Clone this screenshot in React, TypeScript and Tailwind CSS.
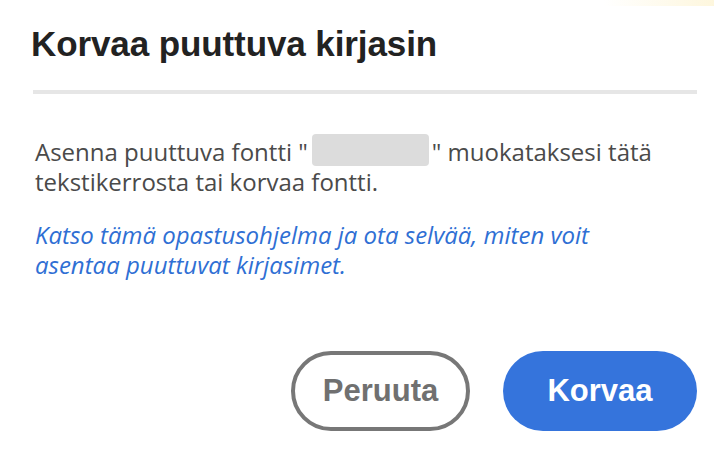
import React from "react";

export default function App() {
  return (
    <div className="w-[714px] h-[460px] bg-white overflow-hidden relative">
      <div className="absolute right-0 top-0 w-[110px] h-[6px] bg-gradient-to-l from-[#fdf3cf] to-transparent opacity-70" />
      <div className="ml-[33px] w-[664px] pt-[24px]">
        <h1
          className="text-[35px] leading-[40px] font-bold text-[#222222] tracking-[-0.1px] -ml-[2px]"
          style={{ fontFamily: '"Liberation Sans", Arial, sans-serif' }}
        >
          Korvaa puuttuva kirjasin
        </h1>
        <div className="mt-[26px] h-[4px] bg-[#e6e6e6]" />
        <div
          className="pl-[2px] w-[634px] mt-[40px] text-[24px] leading-[30px] text-[#4a4a4a]"
          style={{ fontFamily: '"Open Sans", sans-serif' }}
        >
          <p>
            Asenna puuttuva fontti "
            <span className="inline-block w-[117px] h-[32px] ml-[4px] mr-[3px] rounded-[4px] bg-[#dcdcdc] align-[-5px]" />
            " muokataksesi tätä tekstikerrosta tai korvaa fontti.
          </p>
          <p className="mt-[23px] italic text-[#2f6fd4]">
            Katso tämä opastusohjelma ja ota selvää, miten voit asentaa puuttuvat kirjasimet.
          </p>
        </div>
        <div
          className="mt-[71px] flex justify-end gap-[33px]"
          style={{ fontFamily: '"Liberation Sans", Arial, sans-serif' }}
        >
          <button className="w-[179px] h-[80px] rounded-full border-[4px] border-[#777777] text-[#707070] text-[31px] font-bold flex items-center justify-center">
            Peruuta
          </button>
          <button className="w-[194px] h-[80px] rounded-full bg-[#3574dc] text-white text-[31px] font-bold flex items-center justify-center">
            Korvaa
          </button>
        </div>
      </div>
    </div>
  );
}
